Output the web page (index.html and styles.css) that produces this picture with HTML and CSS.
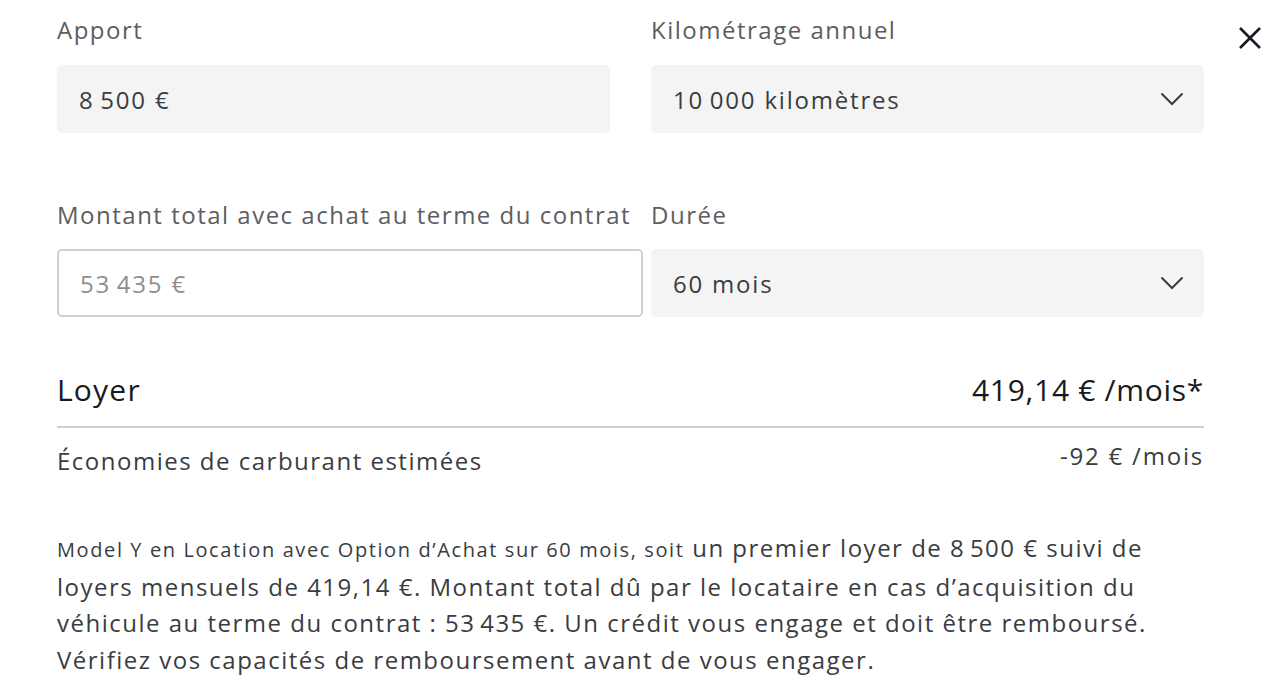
FILE: index.html
```html
<!DOCTYPE html>
<html lang="fr">
<head>
    <meta charset="utf-8">
    <title>Location avec Option d'Achat</title>
    <link rel="stylesheet" href="styles.css">
</head>
<body>
    <button class="close-btn" aria-label="Fermer">
        <svg width="24" height="24" viewBox="0 0 24 24">
            <path d="M2 2 L22 22 M22 2 L2 22" stroke="#171a20" stroke-width="2.6" fill="none"/>
        </svg>
    </button>

    <div class="panel">
        <div class="row row-top">
            <div class="field">
                <label class="field-label">Apport</label>
                <div class="box"><span class="amount">8&#8201;500&nbsp;€</span></div>
            </div>
            <div class="field">
                <label class="field-label">Kilométrage annuel</label>
                <div class="box select">
                    <span class="amount">10&#8201;000 kilomètres</span>
                    <svg class="chevron" width="24" height="14" viewBox="0 0 24 14">
                        <path d="M1.5 1.5 L12 12 L22.5 1.5" stroke="#393c41" stroke-width="2" fill="none"/>
                    </svg>
                </div>
            </div>
        </div>

        <div class="row row-bottom">
            <div class="field field-wide">
                <label class="field-label">Montant total avec achat au terme du contrat</label>
                <div class="box outlined"><span class="amount">53&#8201;435&nbsp;€</span></div>
            </div>
            <div class="field field-narrow">
                <label class="field-label">Durée</label>
                <div class="box select">
                    <span>60 mois</span>
                    <svg class="chevron" width="24" height="14" viewBox="0 0 24 14">
                        <path d="M1.5 1.5 L12 12 L22.5 1.5" stroke="#393c41" stroke-width="2" fill="none"/>
                    </svg>
                </div>
            </div>
        </div>

        <div class="summary">
            <div class="summary-main">
                <span>Loyer</span>
                <span class="price">419,14 € /mois*</span>
            </div>
            <div class="summary-sub">
                <span>Économies de carburant estimées</span>
                <span class="savings">-92 € /mois</span>
            </div>
        </div>

        <p class="disclaimer">
            <span class="small">Model Y en Location avec Option d’Achat sur 60 mois, soit</span>
            un premier loyer de 8&#8239;500 € suivi de loyers mensuels de 419,14 €. Montant total dû par le locataire en cas d’acquisition du véhicule au terme du contrat : 53&#8239;435 €. Un crédit vous engage et doit être remboursé. Vérifiez vos capacités de remboursement avant de vous engager.
        </p>
    </div>
</body>
</html>
```

FILE: styles.css
```css
body {
    margin: 0;
    background-color: #fff;
    font-family: "Open Sans", "Liberation Sans", sans-serif;
    color: #393c41;
    position: relative;
    overflow: hidden;
}

.panel {
    width: 1147px;
    padding-left: 57px;
    padding-top: 13px;
}

.close-btn {
    position: absolute;
    top: 26px;
    left: 1238px;
    background: none;
    border: none;
    padding: 0;
    cursor: pointer;
}

.row {
    display: flex;
}

.row-top {
    gap: 41px;
    margin-bottom: 65px;
}

.row-top .field {
    flex: 1;
}

.row-bottom {
    gap: 8px;
}

.field-wide {
    width: 586px;
}

.field-narrow {
    flex: 1;
}

.field-label {
    display: block;
    font-size: 24px;
    letter-spacing: 1.5px;
    line-height: 34px;
    color: #5c5e62;
    margin-bottom: 18px;
    white-space: nowrap;
}

.row-bottom .field-label {
    margin-bottom: 17px;
}

.box {
    height: 68px;
    box-sizing: border-box;
    background-color: #f4f4f4;
    border-radius: 5px;
    padding: 0 22px;
    display: flex;
    align-items: center;
    font-size: 24px;
    letter-spacing: 1.8px;
    color: #393c41;
}

.amount {
    letter-spacing: 1.8px;
}

.select {
    justify-content: space-between;
}

.chevron {
    margin-right: -2px;
}

.outlined {
    background-color: #fff;
    border: 2px solid #d0d1d2;
    color: #8e8e8e;
    padding-left: 21px;
}

.summary {
    margin-top: 53px;
}

.summary-main {
    display: flex;
    justify-content: space-between;
    font-size: 30px;
    font-weight: 500;
    letter-spacing: 1.2px;
    color: #171a20;
    line-height: 40px;
    padding-bottom: 16px;
    border-bottom: 2px solid #d0d1d2;
}

.price {
    letter-spacing: 0.7px;
}

.summary-sub {
    display: flex;
    justify-content: space-between;
    font-size: 24px;
    letter-spacing: 1.5px;
    color: #393c41;
    line-height: 34px;
    padding-top: 16px;
}

.savings {
    margin-top: -5px;
    letter-spacing: 1.8px;
}

.disclaimer {
    margin: 52px 0 0;
    font-size: 24px;
    letter-spacing: 1.5px;
    line-height: 36.7px;
    color: #393c41;
}

.small {
    font-size: 20px;
    letter-spacing: 1.6px;
}
```
